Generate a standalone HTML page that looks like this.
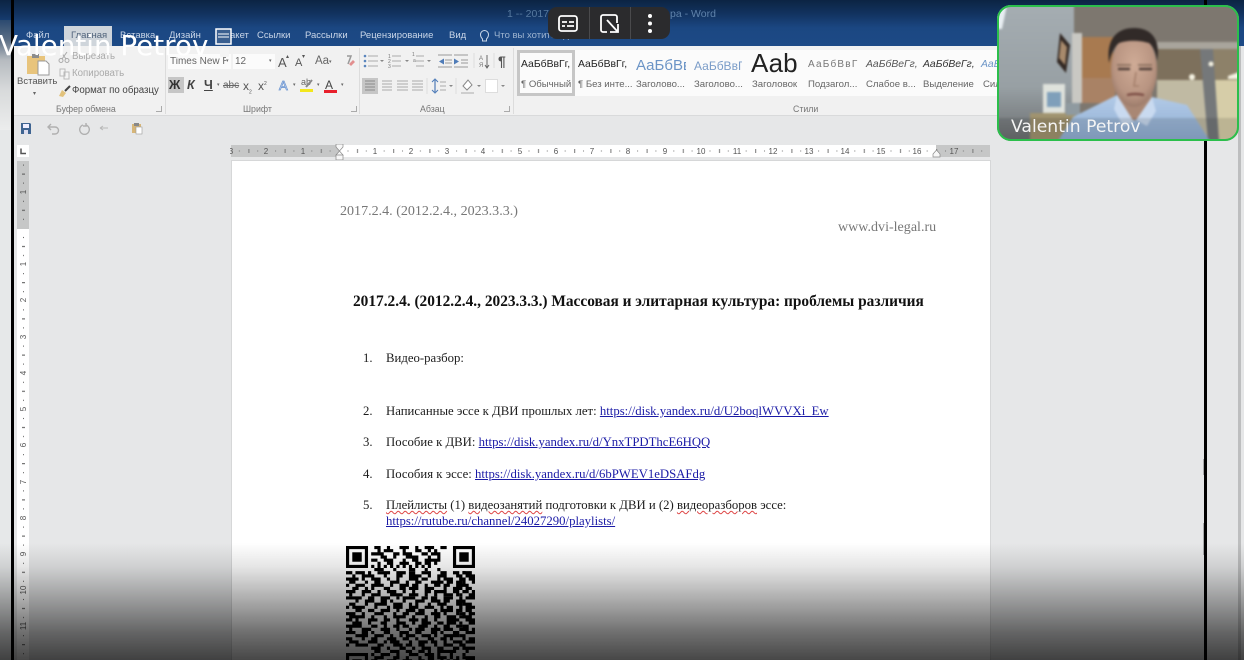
<!DOCTYPE html>
<html lang="ru"><head><meta charset="utf-8"><title>Word</title>
<style>
html,body{margin:0;padding:0;background:#e6e7e8}
#s{position:relative;width:1244px;height:660px;overflow:hidden;background:#e6e7e8;font-family:"Liberation Sans","DejaVu Sans",sans-serif;filter:blur(.35px)}
#s div{position:absolute}
.t{position:absolute;white-space:nowrap;line-height:1}
.tab{font-size:9.5px;color:#c9d6e8;top:31px}
.rb{font-size:9.7px;color:#666}
.ser{font-family:"Liberation Serif","DejaVu Serif",serif;color:#1c1c1c;font-size:12.75px}
.lnk{color:#1a1aa6;text-decoration:underline}
.sq{text-decoration:underline wavy #d44;text-decoration-thickness:1px}
.sl{font-size:9.6px;color:#666;top:80px}
.ar{font-size:5px;color:#666;top:83px}
</style></head><body><div id="s">

<!-- title bar -->
<div style="left:0;top:0;width:1244px;height:46px;background:linear-gradient(#0c2443 0,#123360 14px,#1b4782 28px,#1d4a86 46px)"></div>
<div class="t" style="left:507px;top:9px;font-size:10.5px;color:#56799f">1 -- 2017.2.4.</div>
<div class="t" style="left:670px;top:9px;font-size:10.5px;color:#5f82aa">ра - Word</div>

<!-- tabs -->
<div style="left:64px;top:26px;width:48px;height:20px;background:#cfd5db"></div>
<span class="t tab" style="left:26px">Файл</span>
<span class="t tab" style="left:71px;color:#51647c">Главная</span>
<span class="t tab" style="left:120px">Вставка</span>
<span class="t tab" style="left:169px">Дизайн</span>
<span class="t tab" style="left:222px">Макет</span>
<span class="t tab" style="left:257px">Ссылки</span>
<span class="t tab" style="left:305px">Рассылки</span>
<span class="t tab" style="left:360px">Рецензирование</span>
<span class="t tab" style="left:449px">Вид</span>
<svg style="position:absolute;left:479px;top:29px" width="11" height="15" viewBox="0 0 11 15"><path d="M3.5 10C2 8.500 1.500 7.500 1.500 5.500a4 4 0 0 1 8 0c0 2-.5 3-2 4.500v2h-4z" fill="none" stroke="#c9d6e8"/></svg>
<span class="t tab" style="left:494px;color:#9db4d0">Что вы хотите сделать?</span>

<!-- ribbon -->
<div style="left:0;top:46px;width:1244px;height:69px;background:#f1f1f1;border-bottom:1px solid #d9dadb"></div>
<!-- left wallpaper strip -->
<div style="left:0;top:20px;width:11px;height:110px;background:linear-gradient(#2b4a70 0,#5c6f86 20px,#b6bbc0 40px,#d8dadb 70px,#eceded 110px)"></div>
<div style="left:0;top:130px;width:11px;height:530px;background:#e6e8e9"></div>

<!-- clipboard -->
<svg style="position:absolute;left:26px;top:52px" width="24" height="24" viewBox="0 0 24 24"><rect x="1" y="4" width="18" height="18" fill="#e8c47c"/><rect x="6" y="2" width="7" height="4" fill="#8c8c8c"/><path d="M12 9h8l3 3v11H12z" fill="#fff" stroke="#999"/></svg>
<span class="t rb" style="left:17px;top:77px;color:#555;font-size:9.5px">Вставить</span>
<span class="t" style="left:33px;top:91px;font-size:6px;color:#666">▾</span>
<svg style="position:absolute;left:58px;top:51px" width="12" height="12" viewBox="0 0 12 12"><path d="M3 1l5 7M9 1L4 8" stroke="#aaa" fill="none"/><circle cx="3" cy="9.500" r="2" fill="none" stroke="#aaa"/><circle cx="9" cy="9.500" r="2" fill="none" stroke="#aaa"/></svg>
<svg style="position:absolute;left:59px;top:68px" width="11" height="12" viewBox="0 0 11 12"><path d="M1 1h5v7H1zM5 4h5v7H5z" fill="#f4f4f4" stroke="#bbb"/></svg>
<svg style="position:absolute;left:58px;top:85px" width="13" height="13" viewBox="0 0 13 13"><path d="M7 6l5-5" stroke="#444" stroke-width="2"/><path d="M1 11l3-6 4 3-3 4z" fill="#e2c27c"/></svg>
<span class="t rb" style="left:72px;top:52px;color:#aaa">Вырезать</span>
<span class="t rb" style="left:72px;top:69px;color:#aaa">Копировать</span>
<span class="t rb" style="left:72px;top:86px;color:#444">Формат по образцу</span>
<span class="t rb" style="left:56px;top:105px;font-size:8.8px;color:#777">Буфер обмена</span>
<div style="left:165px;top:48px;width:1px;height:66px;background:#dcdcdc"></div>
<div style="left:156px;top:106px;width:5px;height:5px;border-right:1px solid #aaa;border-bottom:1px solid #aaa"></div>

<!-- font -->
<div style="left:168px;top:54px;width:63px;height:15px;background:#fbfbfb"></div>
<div style="left:233px;top:54px;width:42px;height:15px;background:#fbfbfb"></div>
<span class="t" style="left:170px;top:57px;color:#666;font-size:10px;width:56px;overflow:hidden">Times New R</span>
<span class="t" style="left:235px;top:57px;color:#666;font-size:10px">12</span>
<span class="t" style="left:226px;top:59px;font-size:5px;color:#666">▾</span>
<span class="t" style="left:269px;top:59px;font-size:5px;color:#666">▾</span>
<span class="t" style="left:278px;top:56px;font-size:13px;color:#555">A</span><span class="t" style="left:286px;top:54px;font-size:6px;color:#555">▴</span>
<span class="t" style="left:295px;top:58px;font-size:11px;color:#555">A</span><span class="t" style="left:302px;top:54px;font-size:6px;color:#555">▾</span>
<span class="t" style="left:315px;top:56px;font-size:11.5px;color:#666">Aa</span><span class="t" style="left:329px;top:60px;font-size:5px;color:#666">▾</span>
<svg style="position:absolute;left:344px;top:55px" width="12" height="13" viewBox="0 0 12 13"><path d="M3 1h4L4 9" fill="none" stroke="#999" stroke-width="1.500"/><path d="M5 9l4-4 2 2-4 4z" fill="#e28f8f"/></svg>
<div style="left:168px;top:77px;width:16px;height:16px;background:#c6c6c6"></div>
<span class="t" style="left:169px;top:79px;font-size:12.5px;font-weight:bold;color:#333">Ж</span>
<span class="t" style="left:187px;top:79px;font-size:12.5px;font-weight:bold;font-style:italic;color:#444">К</span>
<span class="t" style="left:204px;top:79px;font-size:12.5px;font-weight:bold;color:#444;text-decoration:underline">Ч</span>
<span class="t" style="left:223px;top:81px;font-size:10px;color:#666;text-decoration:line-through">abc</span>
<span class="t" style="left:243px;top:80px;font-size:12px;color:#555">x<sub style="font-size:5px">2</sub></span>
<span class="t" style="left:258px;top:80px;font-size:12px;color:#555">x<sup style="font-size:5px">2</sup></span>
<span class="t" style="left:279px;top:79px;font-size:13px;color:#f4f6fb;-webkit-text-stroke:.8px #6d96d2">A</span>
<span class="t" style="left:301px;top:78px;font-size:9px;color:#666">ab</span><div style="left:300px;top:89px;width:13px;height:3px;background:#f3e71c"></div>
<svg style="position:absolute;left:305px;top:79px" width="9" height="9" viewBox="0 0 9 9"><path d="M1 8l6-7" stroke="#888" stroke-width="2"/></svg>
<span class="t" style="left:325px;top:79px;font-size:12px;color:#444">A</span><div style="left:324px;top:90px;width:13px;height:3px;background:#e8202c"></div>
<span class="t ar" style="left:293px"> ▾</span><span class="t ar" style="left:317px">▾</span><span class="t ar" style="left:341px">▾</span><span class="t ar" style="left:217px">▾</span>
<span class="t rb" style="left:243px;top:105px;font-size:8.8px;color:#777">Шрифт</span>
<div style="left:351px;top:106px;width:5px;height:5px;border-right:1px solid #aaa;border-bottom:1px solid #aaa"></div>
<div style="left:359px;top:48px;width:1px;height:66px;background:#dcdcdc"></div>

<!-- paragraph icons -->
<svg style="position:absolute;left:355px;top:46px" width="160" height="60" viewBox="355 46 160 60">
<path d="M368 56h10M368 61h10M368 66h10M392 56h9M392 61h9M392 66h9M416 56h8M416 61h8M416 66h8" fill="none" stroke="#aaa"/>
<g fill="#5a85bd"><circle cx="365" cy="56" r="1.300"/><circle cx="365" cy="61" r="1.300"/><circle cx="365" cy="66" r="1.300"/></g>
<g fill="#777" font-size="5" font-family="Liberation Sans"><text x="388" y="58">1</text><text x="388" y="63">2</text><text x="388" y="68">3</text><text x="412" y="56">1</text><text x="413" y="62">a</text></g>
<path d="M380 60l2 2 2-2zM405 60l2 2 2-2zM427 60l2 2 2-2z" fill="#888"/>
<path d="M438 55h14M445 60h7M445 63h7M438 67h14M454 55h14M461 60h7M461 63h7M454 67h14" fill="none" stroke="#999"/>
<path d="M439 61.500l5-3v6zM459 61.500l-5-3v6z" fill="#4f7cb8"/>
<path d="M474 53v15" stroke="#ddd"/>
<path d="M487 55v12M485 65l2 3 2-3" fill="none" stroke="#666"/>
<g fill="#777" font-size="6" font-family="Liberation Sans"><text x="479" y="60">А</text><text x="479" y="67">Я</text></g>
<path d="M494 53v15" stroke="#ddd"/>
<rect x="362" y="78" width="16" height="16" fill="#c6c6c6"/>
<path d="M365 81h10M365 84h10M365 87h10M365 90h10" stroke="#8a8a8a"/>
<path d="M382 81h10M382 84h10M382 87h10M382 90h10M397 81h11M397 84h11M397 87h11M397 90h11M412 81h11M412 84h11M412 87h11M412 90h11" stroke="#aaa"/>
<path d="M427 78v16" stroke="#ddd"/>
<path d="M435 80v12" stroke="#4f7cb8" stroke-width="1.200"/><path d="M432 82l3-3 3 3M432 90l3 3 3-3" fill="none" stroke="#4f7cb8"/><path d="M440 82h6M440 86h6M440 90h6" stroke="#aaa"/>
<path d="M449 85l2 2 2-2z" fill="#888"/>
<path d="M456 78v16" stroke="#ddd"/>
<path d="M463 86l5-6 4 5-5 5z" fill="#fff" stroke="#888"/><path d="M461 93h13" stroke="#aaa"/>
<path d="M477 85l2 2 2-2z" fill="#888"/>
<rect x="485.500" y="79.500" width="12" height="13" fill="#fff" stroke="#ddd"/>
<path d="M501 85l2 2 2-2z" fill="#888"/>
</svg>
<span class="t" style="left:498px;top:54px;font-size:14px;font-weight:bold;color:#555">¶</span>
<span class="t rb" style="left:420px;top:105px;font-size:8.8px;color:#777">Абзац</span>
<div style="left:504px;top:106px;width:5px;height:5px;border-right:1px solid #aaa;border-bottom:1px solid #aaa"></div>
<div style="left:513px;top:48px;width:1px;height:66px;background:#dcdcdc"></div>

<!-- styles -->
<div style="left:517px;top:50px;width:490px;height:46px;background:#fbfbfb"></div>
<div style="left:517px;top:50px;width:58px;height:46px;border:3px solid #c6c6c6;box-sizing:border-box"></div>
<span class="t" style="left:521px;top:60px;font-size:10.4px;color:#222">АаБбВвГг,</span>
<span class="t" style="left:578px;top:60px;font-size:10.4px;color:#222">АаБбВвГг,</span>
<span class="t" style="left:636px;top:58px;width:50px;overflow:hidden;font-size:15px;color:#6b94c6">АаБбВв</span>
<span class="t" style="left:694px;top:60px;width:48px;overflow:hidden;font-size:12px;color:#7a9cc8">АаБбВвГ</span>
<span class="t" style="left:751px;top:50px;font-size:26px;color:#222">Ааb</span>
<span class="t" style="left:808px;top:60px;font-size:10px;letter-spacing:1.2px;color:#777">АаБбВвГ</span>
<span class="t" style="left:866px;top:60px;font-size:10.4px;font-style:italic;color:#555">АаБбВеГг,</span>
<span class="t" style="left:923px;top:60px;font-size:10.4px;font-style:italic;color:#333">АаБбВеГг,</span>
<span class="t" style="left:981px;top:60px;font-size:10.4px;font-style:italic;color:#6b94c6">АаБ</span>
<span class="t sl" style="left:521px">¶ Обычный</span>
<span class="t sl" style="left:578px">¶ Без инте...</span>
<span class="t sl" style="left:636px">Заголово...</span>
<span class="t sl" style="left:694px">Заголово...</span>
<span class="t sl" style="left:752px">Заголовок</span>
<span class="t sl" style="left:808px">Подзагол...</span>
<span class="t sl" style="left:866px">Слабое в...</span>
<span class="t sl" style="left:923px">Выделение</span>
<span class="t sl" style="left:983px">Сил</span>
<span class="t rb" style="left:793px;top:105px;font-size:8.8px;color:#777">Стили</span>

<!-- quick access -->
<svg style="position:absolute;left:20px;top:122px" width="130" height="13" viewBox="0 0 130 13">
<path d="M1 1h9l1 1v10H1z" fill="#3f6491"/><rect x="3" y="2" width="6" height="4" fill="#eef"/><rect x="4" y="8" width="4" height="4" fill="#dde"/>
<path d="M28 5h7a3.500 3.500 0 0 1 0 7h-3M31 2l-3 3 3 3" fill="none" stroke="#b0b0b0" stroke-width="1.400"/>
<path d="M66 3a4.800 4.800 0 1 1-3 0M66 1v3h-3" fill="none" stroke="#b0b0b0" stroke-width="1.400"/>
<path d="M80 6h8M80 6l3-2M80 6l3 2" fill="none" stroke="#b8b8b8"/>
<rect x="112" y="2" width="9" height="9" fill="#d7b678"/><rect x="114" y="1" width="5" height="3" fill="#888"/><rect x="116" y="5" width="6" height="7" fill="#fff" stroke="#999" stroke-width=".6"/>
</svg>

<!-- horizontal ruler -->
<svg style="position:absolute;left:230px;top:144px" width="762" height="17" viewBox="230 144 762 17">
<defs><pattern id="h" x="339" y="145" width="36.200" height="12" patternUnits="userSpaceOnUse"><rect x="8.500" y="5.500" width="1" height="1" fill="#777"/><rect x="18" y="4" width="1" height="4" fill="#777"/><rect x="26.800" y="5.500" width="1" height="1" fill="#777"/></pattern></defs>
<rect x="231" y="145" width="108" height="12" fill="#c6c7c7"/><rect x="339" y="145" width="597" height="12" fill="#fff"/><rect x="936" y="145" width="54" height="12" fill="#c6c7c7"/>
<rect x="231" y="145" width="759" height="12" fill="url(#h)"/>
<g font-family="Liberation Sans" font-size="8" fill="#555" text-anchor="middle"><text x="231" y="154">3</text><text x="266" y="154">2</text><text x="303" y="154">1</text><text x="375" y="154">1</text><text x="411" y="154">2</text><text x="447" y="154">3</text><text x="483" y="154">4</text><text x="520" y="154">5</text><text x="556" y="154">6</text><text x="592" y="154">7</text><text x="628" y="154">8</text><text x="665" y="154">9</text><text x="701" y="154">10</text><text x="737" y="154">11</text><text x="773" y="154">12</text><text x="809" y="154">13</text><text x="845" y="154">14</text><text x="881" y="154">15</text><text x="917" y="154">16</text><text x="954" y="154">17</text></g>
<path d="M336 144h7v3l-3.500 4-3.500-4zM336 160h7v-5h-7zM336 155l3.500-4 3.500 4z" fill="#f7f7f7" stroke="#888" stroke-width=".7"/>
<path d="M933 157v-3l3.500-4 3.500 4v3z" fill="#f7f7f7" stroke="#888" stroke-width=".7"/>
</svg>
<div style="left:17px;top:145px;width:12px;height:12px;background:#fff"></div>
<svg style="position:absolute;left:17px;top:145px" width="12" height="12"><path d="M4 3.500v5h5" fill="none" stroke="#555" stroke-width="1.500"/></svg>

<!-- vertical ruler -->
<svg style="position:absolute;left:17px;top:161px" width="13" height="499" viewBox="17 161 13 499">
<defs><pattern id="v" x="17" y="228" width="12" height="36.200" patternUnits="userSpaceOnUse"><rect x="6" y="9" width="1" height="1" fill="#555"/><rect x="5" y="18" width="3" height="1" fill="#555"/><rect x="6" y="27" width="1" height="1" fill="#555"/></pattern></defs>
<rect x="17" y="161" width="12" height="68" fill="#c6c7c7"/><rect x="17" y="229" width="12" height="431" fill="#fff"/><rect x="17" y="161" width="12" height="499" fill="url(#v)"/>
<g font-family="Liberation Sans" font-size="8" fill="#555" text-anchor="middle">
<text transform="translate(26,192) rotate(-90)">1</text><text transform="translate(26,264) rotate(-90)">1</text><text transform="translate(26,300) rotate(-90)">2</text><text transform="translate(26,337) rotate(-90)">3</text><text transform="translate(26,373) rotate(-90)">4</text><text transform="translate(26,409) rotate(-90)">5</text><text transform="translate(26,445) rotate(-90)">6</text><text transform="translate(26,482) rotate(-90)">7</text><text transform="translate(26,518) rotate(-90)">8</text><text transform="translate(26,554) rotate(-90)">9</text><text transform="translate(26,590) rotate(-90)">10</text><text transform="translate(26,626) rotate(-90)">11</text></g>
</svg>

<!-- page -->
<div style="left:232px;top:161px;width:758px;height:499px;background:#fff;box-shadow:0 0 0 1px #d6d7d8"></div>
<span class="t ser" style="left:340px;top:204px;color:#777;font-size:14.05px">2017.2.4. (2012.2.4., 2023.3.3.)</span>
<span class="t ser" style="left:838px;top:220px;color:#777;font-size:14.05px">www.dvi-legal.ru</span>
<span class="t ser" style="left:353px;top:294px;font-size:15.37px;font-weight:bold;color:#111">2017.2.4. (2012.2.4., 2023.3.3.) Массовая и элитарная культура: проблемы различия</span>
<span class="t ser" style="left:363px;top:352px">1.</span><span class="t ser" style="left:386px;top:352px">Видео-разбор:</span>
<span class="t ser" style="left:363px;top:405px">2.</span><span class="t ser" style="left:386px;top:405px">Написанные эссе к ДВИ прошлых лет: <span class="lnk">https://disk.yandex.ru/d/U2boqlWVVXi_Ew</span></span>
<span class="t ser" style="left:363px;top:436px">3.</span><span class="t ser" style="left:386px;top:436px">Пособие к ДВИ: <span class="lnk">https://disk.yandex.ru/d/YnxTPDThcE6HQQ</span></span>
<span class="t ser" style="left:363px;top:468px">4.</span><span class="t ser" style="left:386px;top:468px">Пособия к эссе: <span class="lnk">https://disk.yandex.ru/d/6bPWEV1eDSAFdg</span></span>
<span class="t ser" style="left:363px;top:499px">5.</span><span class="t ser" style="left:386px;top:499px"><span class="sq">Плейлисты</span> (1) <span class="sq">видеозанятий</span> подготовки к ДВИ и (2) <span class="sq">видеоразборов</span> эссе:</span>
<span class="t ser" style="left:386px;top:515px"><span class="lnk">https://rutube.ru/channel/24027290/playlists/</span></span>

<!-- QR -->
<svg style="position:absolute;left:346px;top:546px" width="129" height="129" viewBox="0 0 41 41">
<g fill="none" stroke="#000">
<path d="M.5.5h6v6h-6zM34.500.5h6v6h-6zM.5 34.500h6v6h-6z"/>
<path d="M9 .5h2m2 0h1m3 0h3m2 0h1m2 0h3m2 0h2M10 1.500h1m1 0h3m3 0h1m3 0h2m2 0h1m1 0h1M8 2.500h4m3 0h2m1 0h3m3 0h2m1 0h3M11 3.500h2m2 0h1m3 0h4m3 0h1m2 0h1M8 4.500h2m2 0h3m3 0h1m2 0h2m2 0h5M10 5.500h1m2 0h2m2 0h3m2 0h2m1 0h2m1 0h1M8 6.500h1m1 0h1m1 0h1m1 0h1m1 0h1m1 0h1m1 0h1m1 0h1m1 0h1m1 0h1M9 7.500h3m3 0h1m4 0h2m3 0h1m3 0h1"/>
<path d="M0 8.500h2m1 0h3m1 0h1m2 0h4m2 0h3m1 0h2m2 0h3m3 0h2m2 0h2m1 0h1M2 9.500h1m2 0h4m3 0h1m3 0h2m2 0h4m2 0h1m2 0h3m3 0h2M0 10.500h4m1 0h1m2 0h3m2 0h1m2 0h1m3 0h3m1 0h2m3 0h1m1 0h3m2 0h2M1 11.500h2m3 0h1m2 0h2m3 0h3m2 0h1m2 0h2m3 0h4m1 0h2m1 0h2M0 12.500h1m2 0h3m2 0h4m2 0h1m2 0h3m1 0h2m2 0h1m2 0h2m1 0h2m2 0h2M2 13.500h2m2 0h1m1 0h1m3 0h2m3 0h2m1 0h3m2 0h3m3 0h1m2 0h3M0 14.500h3m2 0h3m2 0h1m2 0h3m2 0h1m2 0h1m3 0h2m1 0h4m2 0h2M1 15.500h1m3 0h1m2 0h3m3 0h4m2 0h3m2 0h1m2 0h1m2 0h3m1 0h1"/>
<path d="M0 16.500h5m2 0h2m2 0h3m2 0h1m1 0h4m2 0h2m1 0h2m2 0h3m2 0h1M3 17.500h1m2 0h3m2 0h2m1 0h1m3 0h1m3 0h3m2 0h3m1 0h2m2 0h2M1 18.500h2m3 0h1m2 0h4m2 0h3m2 0h1m1 0h1m3 0h1m2 0h3m3 0h2M0 19.500h1m1 0h4m3 0h1m3 0h1m1 0h3m2 0h3m2 0h3m2 0h1m1 0h2m2 0h1M3 20.500h2m2 0h2m2 0h3m2 0h1m2 0h3m1 0h2m3 0h1m1 0h4m1 0h2M0 21.500h3m2 0h1m3 0h3m3 0h1m2 0h2m2 0h3m2 0h3m1 0h1m3 0h1M1 22.500h5m2 0h1m3 0h1m2 0h4m2 0h1m3 0h1m2 0h2m2 0h3m1 0h2M0 23.500h2m1 0h1m3 0h3m2 0h2m2 0h1m3 0h3m1 0h2m2 0h1m3 0h4"/>
<path d="M2 24.500h3m2 0h1m3 0h2m3 0h3m2 0h1m2 0h3m2 0h2m1 0h3M0 25.500h5m3 0h2m2 0h1m2 0h2m1 0h2m3 0h3m2 0h1m2 0h2m2 0h2M1 26.500h1m3 0h3m3 0h3m2 0h1m3 0h1m1 0h3m2 0h3m1 0h3M0 27.500h3m2 0h2m1 0h1m3 0h2m3 0h3m2 0h2m3 0h2m1 0h1m3 0h2M3 28.500h4m2 0h3m2 0h1m2 0h1m1 0h3m2 0h3m1 0h1m2 0h5M0 29.500h2m3 0h1m2 0h2m3 0h3m2 0h2m2 0h1m3 0h2m2 0h2m1 0h1M1 30.500h3m3 0h3m2 0h1m1 0h3m3 0h1m2 0h3m1 0h2m2 0h1m2 0h3M0 31.500h1m2 0h4m3 0h2m3 0h3m1 0h2m2 0h2m3 0h1m2 0h3M8 32.500h3m2 0h1m3 0h2m2 0h1m2 0h3m2 0h2m3 0h2M9 33.500h2m3 0h3m2 0h2m2 0h2m1 0h1m2 0h6"/>
<path d="M8 34.500h1m2 0h3m2 0h1m3 0h3m2 0h3m1 0h1m3 0h1m3 0h1M9 35.500h3m3 0h2m2 0h1m3 0h1m2 0h2m1 0h3m1 0h1m1 0h1M8 36.500h2m3 0h3m2 0h3m2 0h2m1 0h2m2 0h1m1 0h1m1 0h2"/>
<path d="M37 8.500h3M38 9.500h3M36 10.500h2m1 0h2M37 11.500h1m2 0h1M36 12.500h3M38 13.500h2M37 14.500h2m1 0h1M36 15.500h1m2 0h2M38 16.500h3M36 17.500h2M37 18.500h3M36 19.500h1m1 0h3M38 20.500h2M36 21.500h2m1 0h2M37 22.500h3M38 23.500h3M36 24.500h1m2 0h2M37 25.500h2M36 26.500h3m1 0h1M38 27.500h3M36 28.500h2M37 29.500h1m1 0h2M38 30.500h3M36 31.500h2M37 32.500h4M38 33.500h1M37 35.500h4M35 36.500h1m2 0h3M34 37.500h3m2 0h2M36 38.500h4M34 39.500h1m2 0h2m1 0h1M35 40.500h4"/>
<path d="M9 37.500h4m2 0h1m2 0h3m2 0h2m2 0h3M8 38.500h1m2 0h3m3 0h1m2 0h1m2 0h3m2 0h3M10 39.500h2m2 0h3m2 0h2m3 0h1m2 0h4M8 40.500h3m3 0h1m2 0h4m2 0h3m2 0h2"/>
</g>
<rect x="2" y="2" width="3" height="3"/><rect x="36" y="2" width="3" height="3"/><rect x="2" y="36" width="3" height="3"/>
</svg>

<!-- black vertical bars -->
<div style="left:11px;top:0;width:3px;height:660px;background:#000"></div>
<div style="left:1204px;top:0;width:3px;height:660px;background:#000"></div>
<!-- right strip -->
<div style="left:1207px;top:46px;width:37px;height:614px;background:#e6e7e8"></div>
<div style="left:1238px;top:46px;width:3px;height:614px;background:#bdbebf"></div>
<div style="left:1203px;top:459px;width:1px;height:16px;background:#a9aaab"></div>
<div style="left:1203px;top:523px;width:1px;height:32px;background:#a9aaab"></div>

<!-- bottom fade -->
<div style="left:0;top:543px;width:1244px;height:117px;background:linear-gradient(rgba(0,0,0,0) 0,rgba(0,0,0,.1) 24px,rgba(0,0,0,.24) 44px,rgba(0,0,0,.38) 64px,rgba(0,0,0,.57) 90px,rgba(0,0,0,.72) 117px)"></div>

<!-- name overlay -->
<span class="t" style="left:-1px;top:32px;font-family:'DejaVu Sans',sans-serif;font-size:27.8px;color:#fff">Valentin Petrov</span>
<svg style="position:absolute;left:215px;top:28px" width="17" height="30" viewBox="0 0 17 30"><rect x="1" y="1" width="15" height="15" fill="#3a5f90" stroke="#fff" stroke-width="1.500"/><path d="M3 6h11M3 9h11" stroke="#fff"/><rect x="5" y="20" width="9" height="9" rx="1" fill="#f4f4f4"/></svg>

<!-- floating toolbar -->
<div style="left:548px;top:7px;width:122px;height:32px;background:#2b2b2d;border-radius:9px"></div>
<div style="left:589px;top:7px;width:1px;height:32px;background:#4a4a4c"></div>
<div style="left:630px;top:7px;width:1px;height:32px;background:#4a4a4c"></div>
<svg style="position:absolute;left:548px;top:7px" width="122" height="32" viewBox="0 0 122 32">
<rect x="11" y="9" width="18" height="15" rx="2.500" fill="none" stroke="#fff" stroke-width="1.800"/>
<path d="M14 15h5M21 15h5M14 19h3M19 19h7" stroke="#fff" stroke-width="1.700"/>
<path d="M59 25h-4a2 2 0 0 1-2-2V10a2 2 0 0 1 2-2h12a2 2 0 0 1 2 2v6" fill="none" stroke="#fff" stroke-width="1.800"/>
<path d="M59 13l10 11M70 17v8h-8" fill="none" stroke="#fff" stroke-width="1.800"/>
<circle cx="102" cy="9" r="2" fill="#fff"/><circle cx="102" cy="16.500" r="2" fill="#fff"/><circle cx="102" cy="24" r="2" fill="#fff"/>
</svg>

<!-- webcam -->
<div style="left:997px;top:5px;width:242px;height:136px;border-radius:14px;overflow:hidden;background:#8a8580">
<svg width="242" height="136" viewBox="997 5 242 136" style="display:block;filter:blur(1px)">
<defs>
<linearGradient id="w1" x1="0" y1="0" x2="0" y2="1"><stop offset="0" stop-color="#a5adb2"/><stop offset=".6" stop-color="#98a0a4"/><stop offset="1" stop-color="#6b6e70"/></linearGradient>
<radialGradient id="f" cx=".5" cy=".42" r=".62"><stop offset="0" stop-color="#cfab96"/><stop offset=".7" stop-color="#b89481"/><stop offset="1" stop-color="#957565"/></radialGradient>
<linearGradient id="sh" x1="0" y1="0" x2="0" y2="1"><stop offset="0" stop-color="#b3cbe8"/><stop offset="1" stop-color="#8fadd2"/></linearGradient>
</defs>
<rect x="997" y="5" width="242" height="136" fill="#7d776f"/>
<rect x="997" y="5" width="77" height="136" fill="url(#w1)"/>
<path d="M997 5h10l-5 24h-5z" fill="#e8eef2"/>
<rect x="1072" y="33" width="10" height="70" fill="#c9c8c3"/>
<rect x="1082" y="37" width="31" height="41" fill="#a87a50"/>
<rect x="1082" y="78" width="33" height="25" fill="#a98265"/>
<rect x="1157" y="42" width="82" height="7" fill="#a9a59c"/>
<rect x="1157" y="49" width="82" height="31" fill="#7d705c"/>
<rect x="1157" y="80" width="82" height="61" fill="#c0baa3"/>
<rect x="1213" y="49" width="26" height="31" fill="#8d8169"/>
<rect x="1213" y="80" width="26" height="61" fill="#d6cda8"/>
<path d="M1200 49h13l6 92h-11z" fill="#75787a"/>
<circle cx="1211" cy="64" r="2.500" fill="#f5f2e2"/><circle cx="1192" cy="77" r="3" fill="#f5f2e2"/><path d="M1228 76l11-4v7h-11z" fill="#f5f2e2"/>
<path d="M1060 33l10 12-4 28-9-11z" fill="#322823"/><path d="M1061 40l6 7-2 18-6-7z" fill="#a88a6c"/>
<rect x="1043" y="84" width="22" height="29" fill="#dfe2dc"/><rect x="1047" y="92" width="14" height="15" fill="#7f9fba"/>
<rect x="1030" y="113" width="48" height="28" fill="#a0936f"/>
<rect x="1066" y="103" width="14" height="12" fill="#8f9aa0"/>
<path d="M1058 141l15-24 44-22 35 2 35 8 23 36z" fill="url(#sh)"/>
<path d="M1118 86h34v16l-14 18h-8l-12-18z" fill="#a98774"/>
<path d="M1117 95l-3 14 9 17 11-4zM1152 97l4 14-9 15-11-6z" fill="#c9daf0"/>
<ellipse cx="1134" cy="70" rx="23" ry="37" fill="url(#f)"/>
<path d="M1109 63c-3-24 8-35 25-35s27 11 23 33c-1-9-4-15-8-18-10-3-22-3-30 0-5 4-8 11-10 20z" fill="#312a28"/>
<path d="M1118 69h12M1139 69h13" stroke="#4a3a34" stroke-width="2.200"/>
<path d="M1117 65h14M1138 65h14" stroke="#77604f" stroke-width="1.300"/>
<path d="M1136 72l-2 14h5" fill="none" stroke="#a5806c" stroke-width="1.600"/>
<path d="M1127 95q8-2 17 0" stroke="#7d4f46" stroke-width="2.400" fill="none"/>
<rect x="997" y="118" width="242" height="23" fill="#000" opacity=".12"/>
</svg>
<span class="t" style="left:14px;top:114px;font-family:'DejaVu Sans',sans-serif;font-size:17.2px;color:#f4f4f4">Valentin Petrov</span>
</div>
<div style="left:997px;top:5px;width:242px;height:136px;border-radius:14px;border:2px solid #2bbf4b;box-sizing:border-box"></div>

</div></body></html>
